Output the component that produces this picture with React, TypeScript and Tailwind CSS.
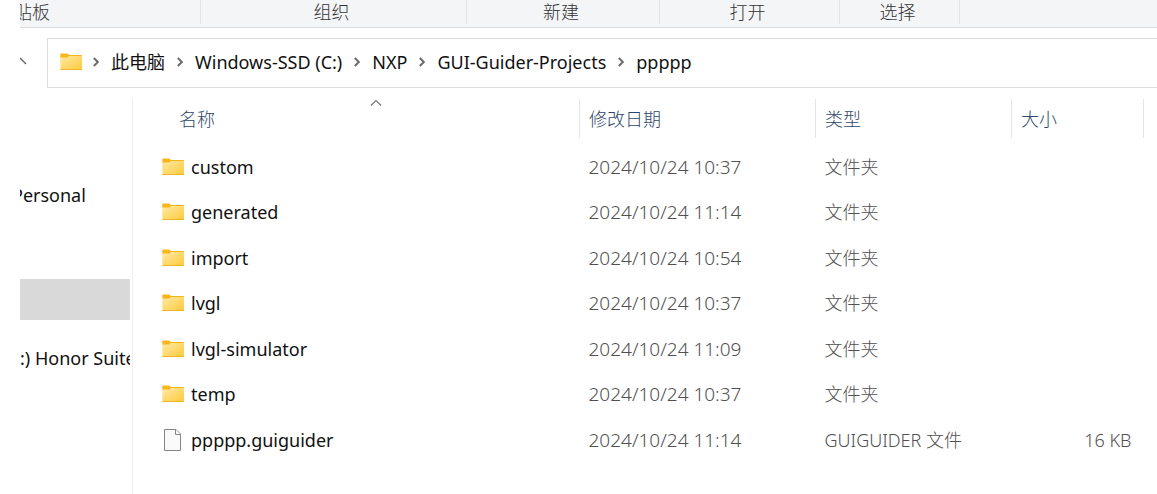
import { Fragment } from "react";

type Entry = {
  name: string;
  modified: string;
  type: string;
  size?: string;
  kind: "folder" | "file";
};

const entries: Entry[] = [
  { name: "custom", modified: "2024/10/24 10:37", type: "文件夹", kind: "folder" },
  { name: "generated", modified: "2024/10/24 11:14", type: "文件夹", kind: "folder" },
  { name: "import", modified: "2024/10/24 10:54", type: "文件夹", kind: "folder" },
  { name: "lvgl", modified: "2024/10/24 10:37", type: "文件夹", kind: "folder" },
  { name: "lvgl-simulator", modified: "2024/10/24 11:09", type: "文件夹", kind: "folder" },
  { name: "temp", modified: "2024/10/24 10:37", type: "文件夹", kind: "folder" },
  { name: "ppppp.guiguider", modified: "2024/10/24 11:14", type: "GUIGUIDER 文件", size: "16 KB", kind: "file" },
];

const crumbs = ["此电脑", "Windows-SSD (C:)", "NXP", "GUI-Guider-Projects", "ppppp"];

function FolderIcon({ id }: { id: string }) {
  return (
    <svg className="h-[18px] w-[22px] shrink-0" viewBox="0 0 22 18" aria-hidden="true">
      <defs>
        <linearGradient id={id} x1="0" y1="0" x2="1" y2="1">
          <stop offset="0" stopColor="#ffe9a6" />
          <stop offset="1" stopColor="#ffca3a" />
        </linearGradient>
      </defs>
      <path d="M0.3 1.2Q0.3 0.4 1 0.4H7Q7.6 0.4 8 1L8.8 2H21.3Q22 2 22 2.8V5H0.3Z" fill="#f8b61c" />
      <path d="M0.3 4.5H7.4L9 3H22V16.4Q22 17 21.4 17H0.9Q0.3 17 0.3 16.4Z" fill={`url(#${id})`} />
      <path d="M0.6 16.5H21.7" stroke="#f0b428" strokeWidth="1" />
    </svg>
  );
}

function FileIcon() {
  return (
    <svg className="h-[22px] w-[22px] shrink-0" viewBox="0 0 22 22" aria-hidden="true">
      <path d="M2.5 0.5H14L18.5 5V21.5H2.5Z" fill="#fafafa" stroke="#858585" />
      <path d="M13.5 0.8V5.5H18.3" fill="#fff" stroke="#858585" />
    </svg>
  );
}

function CrumbArrow() {
  return (
    <svg className="h-[10px] w-[6px] shrink-0" viewBox="0 0 6 10" aria-hidden="true">
      <path d="M0.8 1L4.8 5L0.8 9" fill="none" stroke="#6b6b6b" strokeWidth="1.9" />
    </svg>
  );
}

const groupClass = "flex shrink-0 items-center justify-center border-r border-[#e1e3e5] pr-1";

export default function App() {
  return (
    <div className="overflow-hidden bg-white pl-5 font-['Noto_Sans','Noto_Sans_CJK_SC',sans-serif] text-[18px] leading-6 text-[#111]">
      <header className="flex h-7 overflow-hidden border-b border-[#dcdcdc] bg-[#f4f5f7] pb-[3px] font-light text-[#333]">
        <div className="flex w-[181px] shrink-0 items-center border-r border-[#e1e3e5]">
          <span className="-ml-[6px]">贴板</span>
        </div>
        <div className={`${groupClass} w-[266px]`}>组织</div>
        <div className={`${groupClass} w-[193px]`}>新建</div>
        <div className={`${groupClass} w-[180px]`}>打开</div>
        <div className={`${groupClass} w-[120px]`}>选择</div>
      </header>

      <div className="mt-[10px] flex items-center">
        <button type="button" aria-label="↑" className="flex w-[27px] shrink-0 pb-1">
          <svg className="h-2 w-[7px]" viewBox="0 0 7 8" aria-hidden="true">
            <path d="M0 1L6 7" fill="none" stroke="#666" strokeWidth="1.5" />
          </svg>
        </button>
        <nav className="flex h-[50px] min-w-0 flex-1 items-center border border-r-0 border-[#dcdcdc] pb-[2px] pl-3">
          <FolderIcon id="address-folder" />
          {crumbs.map((crumb) => (
            <Fragment key={crumb}>
              <span className="mx-3 flex first-of-type:ml-[11px]">
                <CrumbArrow />
              </span>
              <a href="#" className="whitespace-nowrap">
                {crumb}
              </a>
            </Fragment>
          ))}
        </nav>
      </div>

      <div className="mt-[11px] flex">
        <aside className="flex min-h-[395px] w-[113px] shrink-0 flex-col overflow-hidden border-r border-[#efefef] pr-[2px] pt-[76px]">
          <a href="#" className="flex h-10 items-center overflow-hidden whitespace-nowrap">
            <span className="-ml-2">Personal</span>
          </a>
          <div className="mt-16 h-[41px] rounded-r-[1px] bg-[#d9d9d9]" />
          <a href="#" className="mt-[18px] flex h-10 items-center overflow-hidden whitespace-nowrap">
            :) Honor Suite
          </a>
        </aside>

        <main className="min-w-0 flex-1 pr-[13px]">
          <table className="w-full table-fixed border-collapse text-left">
            <colgroup>
              <col />
              <col className="w-[236px]" />
              <col className="w-[196px]" />
              <col className="w-[132px]" />
            </colgroup>
            <thead className="text-[#2f4768]">
              <tr className="h-[39px]">
                <th className="relative border-r border-[#e5e5e5] py-0 pl-[46px] font-light">
                  名称
                  <svg className="absolute left-[237px] top-0 h-2 w-3" viewBox="0 0 12 8" aria-hidden="true">
                    <path d="M1 6.5L6 1.5L11 6.5" fill="none" stroke="#777" strokeWidth="1.2" />
                  </svg>
                </th>
                <th className="border-r border-[#e5e5e5] py-0 pl-[9px] font-light">修改日期</th>
                <th className="border-r border-[#e5e5e5] py-0 pl-[9px] font-light">类型</th>
                <th className="border-r border-[#e5e5e5] py-0 pl-[9px] font-light">大小</th>
              </tr>
            </thead>
            <tbody className="text-[#505050] before:block before:h-[6px] before:content-['']">
              {entries.map((entry, i) => (
                <tr key={entry.name} className="h-[45px] even:h-[46px]">
                  <td className="py-0 pl-[29px] text-[#111]">
                    <a href="#" className="flex items-center gap-[7px]">
                      {entry.kind === "folder" ? <FolderIcon id={`folder-${i}`} /> : <FileIcon />}
                      {entry.name}
                    </a>
                  </td>
                  <td className="py-0 pl-[9px] text-[19px] font-light">{entry.modified}</td>
                  <td className="py-0 pl-[9px] font-light">{entry.type}</td>
                  <td className="py-0 pr-3 text-right font-light">{entry.size}</td>
                </tr>
              ))}
            </tbody>
          </table>
        </main>
      </div>
    </div>
  );
}
